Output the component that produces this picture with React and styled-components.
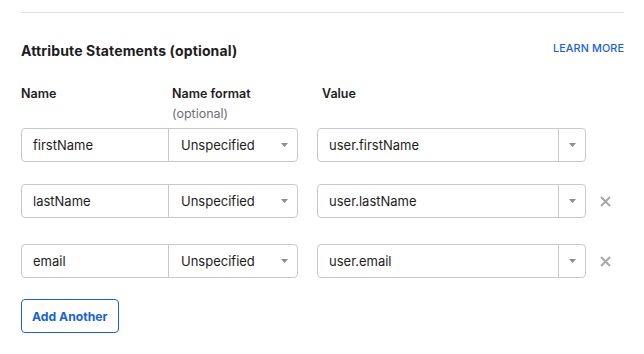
import React from "react";
import styled, { createGlobalStyle } from "styled-components";

const GlobalStyle = createGlobalStyle`
  body {
    margin: 0;
    background: #fff;
    font-family: "Inter", "Liberation Sans", sans-serif;
    color: #1d1d21;
  }
`;

const rows = [
  { name: "firstName", value: "user.firstName", removable: false },
  { name: "lastName", value: "user.lastName", removable: true },
  { name: "email", value: "user.email", removable: true },
];

function Caret() {
  return (
    <svg width="7" height="4" viewBox="0 0 7 4">
      <path d="M0 0h7L3.5 4z" fill="#8c8c96" />
    </svg>
  );
}

function Cross() {
  return (
    <svg width="11" height="11" viewBox="0 0 11 11">
      <path d="M1 1l9 9M10 1l-9 9" stroke="#a7a7ad" strokeWidth="2" />
    </svg>
  );
}

function App() {
  return (
    <Page>
      <GlobalStyle />
      <Divider />
      <Heading>
        <Title>Attribute Statements (optional)</Title>
        <LearnMore href="#">LEARN MORE</LearnMore>
      </Heading>
      <Labels>
        <Label>Name</Label>
        <Label>
          Name format
          <Hint>(optional)</Hint>
        </Label>
        <Label>Value</Label>
      </Labels>
      {rows.map((r, i) => (
        <Row key={r.name} first={i === 0}>
          <Group>
            <NameInput>{r.name}</NameInput>
            <Select>
              Unspecified
              <Caret />
            </Select>
          </Group>
          <Combo>
            <ComboText>{r.value}</ComboText>
            <ComboToggle>
              <Caret />
            </ComboToggle>
          </Combo>
          <Remove>{r.removable && <Cross />}</Remove>
        </Row>
      ))}
      <AddButton>Add Another</AddButton>
    </Page>
  );
}

const Page = styled.div`
  width: 603px;
  padding: 12px 20px 20px 21px;
`;

const Divider = styled.div`
  height: 1px;
  background: #e3e3e6;
`;

const Heading = styled.div`
  display: flex;
  justify-content: space-between;
  align-items: center;
  margin-top: 26px;
  height: 18px;
`;

const Title = styled.h2`
  margin: 0;
  font-size: 14px;
  font-weight: 700;
  letter-spacing: 0.15px;
  color: #1d1d21;
  position: relative;
  top: 2px;
`;

const LearnMore = styled.a`
  font-size: 10.8px;
  font-weight: 500;
  color: #1662dd;
  text-decoration: none;
  letter-spacing: 0.1px;
`;

const Labels = styled.div`
  display: grid;
  grid-template-columns: 151px 150px 1fr;
  margin-top: 27px;
`;

const Label = styled.div`
  font-size: 12.5px;
  font-weight: 600;
  line-height: 20px;
  color: #1d1d21;
`;

const Hint = styled.div`
  font-weight: 400;
  font-size: 12.5px;
  color: #6e6e78;
`;

const Row = styled.div`
  display: flex;
  align-items: center;
  height: 34px;
  margin-top: ${(p) => (p.first ? "4px" : "22px")};
  &:last-of-type {
    margin-top: 26px;
  }
`;

const Group = styled.div`
  display: flex;
  height: 34px;
  border: 1px solid #c8c8ce;
  border-radius: 4px;
  box-sizing: border-box;
`;

const NameInput = styled.div`
  width: 147px;
  padding-left: 11px;
  box-sizing: border-box;
  border-right: 1px solid #c8c8ce;
  display: flex;
  align-items: center;
  font-size: 13px;
`;

const Select = styled.div`
  width: 128px;
  padding: 0 9px 0 12px;
  box-sizing: border-box;
  display: flex;
  align-items: center;
  justify-content: space-between;
  font-size: 13px;
`;

const Combo = styled.div`
  display: flex;
  margin-left: 19px;
  width: 269px;
  height: 34px;
  border: 1px solid #c8c8ce;
  border-radius: 4px;
  box-sizing: border-box;
`;

const ComboText = styled.div`
  flex: 1;
  padding-left: 11px;
  display: flex;
  align-items: center;
  font-size: 13px;
  border-right: 1px solid #c8c8ce;
`;

const ComboToggle = styled.div`
  width: 26px;
  display: flex;
  align-items: center;
  justify-content: center;
`;

const Remove = styled.div`
  width: 11px;
  margin-left: 14px;
  display: flex;
  align-items: center;
`;

const AddButton = styled.button`
  display: block;
  margin-top: 21px;
  height: 34px;
  padding: 0 10px;
  background: #fff;
  border: 1px solid #1662dd;
  border-radius: 4px;
  color: #1662dd;
  font-family: "Inter", "Liberation Sans", sans-serif;
  font-size: 12.2px;
  font-weight: 700;
  white-space: nowrap;
`;

export default App;
